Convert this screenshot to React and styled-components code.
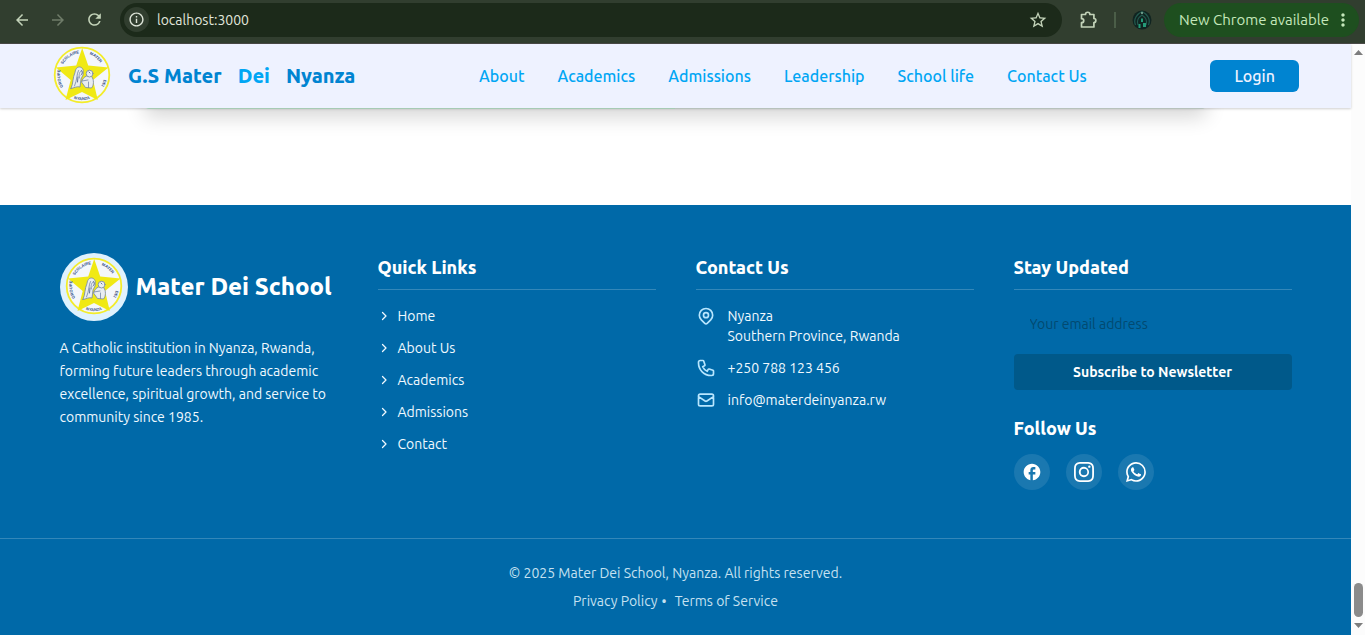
import React from 'react';
import styled, { createGlobalStyle } from 'styled-components';
import {
  HiOutlineChevronRight,
  HiOutlineLocationMarker,
  HiOutlinePhone,
  HiOutlineMail,
} from 'react-icons/hi';
import { MdFacebook, MdArrowBack, MdArrowForward, MdRefresh, MdMoreVert, MdStarBorder, MdOutlineInfo } from 'react-icons/md';
import { BsInstagram, BsWhatsapp } from 'react-icons/bs';

const GlobalStyle = createGlobalStyle`
  *, *::before, *::after { box-sizing: border-box; }
  body {
    margin: 0;
    background: #fff;
    font-family: Ubuntu, "Noto Sans", "Open Sans", sans-serif;
    font-size: 14px;
    line-height: 20px;
  }
  h1, h2, p, ul, address { margin: 0; padding: 0; font-style: normal; }
  ul { list-style: none; }
  a { color: inherit; text-decoration: none; }
  button, input { font: inherit; border: 0; cursor: pointer; }
  svg { display: block; flex: none; }
`;

const Window = styled.div`
  min-height: 100vh;
  display: flex;
  flex-direction: column;
`;

/* Browser toolbar */
const Toolbar = styled.div`
  height: 44px;
  padding: 0 6px 4px 8px;
  display: flex;
  align-items: center;
  background: #313e2f;
  border-bottom: 1px solid #4a4a47;
`;

const ToolButton = styled.button`
  width: 28px;
  height: 28px;
  margin-right: 8px;
  padding: 0;
  display: grid;
  place-items: center;
  background: none;
  color: ${(p) => (p.$dim ? '#6f7c69' : '#c3d3b9')};
`;

const AddressBar = styled.div`
  flex: 1;
  height: 34px;
  margin-left: 4px;
  padding: 0 14px 0 4px;
  display: flex;
  align-items: center;
  gap: 8px;
  border-radius: 17px;
  background: #1c2a1a;
  color: #c3d3b9;
`;

const SiteInfo = styled.button`
  width: 25px;
  height: 25px;
  padding: 0;
  display: grid;
  place-items: center;
  border-radius: 50%;
  background: #313e2f;
  color: #dfe6da;
`;

const AddressInput = styled.input`
  flex: 1;
  min-width: 0;
  padding: 0;
  background: none;
  color: #e1e6dc;
  outline: none;
`;

const BarIcon = styled.button`
  padding: 0;
  background: none;
  color: #c3d3b9;
`;

const BarTools = styled.div`
  display: flex;
  align-items: center;
  gap: 16px;
  padding: 0 12px 0 16px;
`;

const BarDivider = styled.span`
  width: 2px;
  height: 16px;
  background: #4b5e48;
`;

const UpdateChip = styled.button`
  height: 34px;
  min-width: 195px;
  padding: 0 6px 0 15px;
  display: flex;
  align-items: center;
  justify-content: space-between;
  border-radius: 17px;
  background: #1e4f1f;
  color: #c5e8bb;
  font-size: 15px;
  white-space: nowrap;
`;

/* Page area and its scrollbar */
const Viewport = styled.div`
  flex: 1;
  display: flex;
`;

const Page = styled.div`
  flex: 1;
  min-width: 0;
  display: flex;
  flex-direction: column;
`;

const ScrollTrack = styled.div`
  width: 14px;
  padding: 6px 2px 7px 3px;
  display: flex;
  flex-direction: column;
  align-items: center;
  background: #fcfcfc;
`;

const ScrollThumb = styled.div`
  width: 9px;
  height: 34px;
  margin: auto 0 6px;
  border-radius: 5px;
  background: #8b8b8b;
`;

/* Header */
const Header = styled.header`
  position: relative;
  z-index: 1;
  height: 64px;
  padding: 0 52px;
  display: flex;
  align-items: center;
  justify-content: space-between;
  background: #eef2ff;
  box-shadow: 0 1px 3px rgba(0, 0, 0, 0.1), 0 1px 2px rgba(0, 0, 0, 0.1);
`;

const Brand = styled.a`
  display: flex;
  align-items: center;
  gap: 16px;
  font-size: 20px;
  font-weight: 800;
  line-height: 28px;
  color: #0084d1;
`;

const BrandAccent = styled.span`
  color: #00a6f4;
`;

const Nav = styled.nav`
  display: flex;
  gap: 33px;
  font-size: 16px;
  font-weight: 500;
  line-height: 24px;
  color: #00a6f4;
`;

const LoginButton = styled.button`
  height: 32px;
  padding: 0 24px;
  border-radius: 6px;
  background: #0084d1;
  color: #eef2ff;
  font-size: 16px;
  font-weight: 500;
`;

/* Tail of the map card that scrolls under the header */
const MapSection = styled.main`
  flex: 1;
  min-height: 97px;
  padding: 0 145px;
  overflow: hidden;
`;

const MapCard = styled.div`
  height: 60px;
  margin-top: -59px;
  border-radius: 0 0 4px 4px;
  background: linear-gradient(90deg, #bfe9cf 0 50%, #d3ded8 50% 100%);
  box-shadow: 0 8px 20px rgba(0, 0, 0, 0.16);
`;

/* Footer */
const Footer = styled.footer`
  background: #0069a8;
  color: #f0f9ff;
`;

const Columns = styled.div`
  max-width: 1280px;
  margin: 0 auto;
  padding: 48px 24px;
  display: grid;
  grid-template-columns: repeat(4, minmax(0, 1fr));
  gap: 40px;
`;

const SchoolName = styled.div`
  display: flex;
  align-items: center;
  gap: 8px;
  margin-bottom: 16px;
`;

const Badge = styled.span`
  padding: 4px;
  border-radius: 50%;
  background: #dff2fe;
`;

const SchoolTitle = styled.h1`
  font-size: 24px;
  font-weight: 800;
  line-height: 32px;
  color: #fff;
  white-space: nowrap;
`;

const About = styled.p`
  line-height: 23px;
`;

const Heading = styled.h2`
  font-size: 18px;
  font-weight: 800;
  line-height: 28px;
  color: #fff;
  ${(p) =>
    p.$ruled
      ? 'padding-bottom: 8px; margin-bottom: 16px; border-bottom: 1px solid rgba(255, 255, 255, 0.2);'
      : 'margin-bottom: 12px;'}
`;

const List = styled.ul`
  display: flex;
  flex-direction: column;
  gap: 12px;
`;

const QuickLink = styled.a`
  display: flex;
  align-items: center;
  gap: 8px;

  path { stroke-width: 2.5; }
`;

const ContactItem = styled.li`
  display: flex;
  gap: 12px;

  svg { color: #b8e6fe; }
`;

const Form = styled.form`
  display: flex;
  flex-direction: column;
  gap: 12px;
  margin-bottom: 24px;
`;

const EmailInput = styled.input`
  height: 36px;
  padding: 0 16px;
  border-radius: 4px;
  background: transparent;
  color: #fff;

  &::placeholder { color: #024a70; opacity: 1; }
`;

const SubscribeButton = styled.button`
  height: 36px;
  border-radius: 4px;
  background: #00598a;
  color: #fff;
  font-weight: 600;
`;

const Socials = styled.div`
  display: flex;
  gap: 16px;
`;

const SocialLink = styled.a`
  width: 36px;
  height: 36px;
  display: grid;
  place-items: center;
  border-radius: 50%;
  background: rgba(255, 255, 255, 0.1);
  color: #fff;
`;

const Legal = styled.div`
  padding: 24px;
  display: flex;
  flex-direction: column;
  align-items: center;
  gap: 8px;
  border-top: 1px solid rgba(255, 255, 255, 0.2);
  color: #c6e1f1;
`;

const LegalLinks = styled.p`
  display: flex;
  gap: 4px;
`;

const LegalDot = styled.span`
  margin-right: 4px;
`;

const Crest = ({ id }) => (
  <svg width="60" height="60" viewBox="0 0 60 60" role="img" aria-label="School crest">
    <defs>
      <path id={`${id}-ring`} d="M14.400 44.600A22 22 0 1 1 45.600 44.600" />
      <path id={`${id}-foot`} d="M12.300 46.700A25 25 0 0 0 47.700 46.700" />
    </defs>
    <circle cx="30" cy="29" r="27.300" fill="#f4f7fb" stroke="#f3ec2b" strokeWidth="1.800" />
    <path
      d="M30.200 2L36.200 19.500 56.500 21.500 41 34 45.800 54 30 46 13.500 54 18.700 34 4 21.500 24.200 19.500z"
      fill="#f0e914"
    />
    <g fill="#e9edf0" stroke="#7385a6" strokeWidth=".8" strokeLinecap="round">
      <path d="M19 42.500C21.500 37 20.500 32 23 26.500C23.500 22 26 20.500 28.500 21.200C31.800 22.200 31.500 26 31 29L29 33 28 41C25 40 22 42 19 42.500z" />
      <path d="M34.500 30C32 31 30.500 33 29.500 36L33.500 41.500 39.500 42C42 39 42 34 40 31z" />
      <circle cx="37.600" cy="27.600" r="3.400" />
      <path
        d="M26.500 24.500C24.500 28 25.500 33 22.500 40M29.500 25C27.500 25 26.500 29 27.500 32M30 35L36 34M36.500 36L36.500 41.500"
        fill="none"
      />
      <path d="M29.500 24.500C31 26 30.500 28 29 29M37 26L38 27M26 31L25.500 36" fill="none" stroke="#3c5485" />
    </g>
    <g fill="#2f4b83" fontSize="4" fontWeight="700" fontFamily="Liberation Sans, sans-serif">
      <text><textPath href={`#${id}-ring`} startOffset="5">GROUPE</textPath></text>
      <text><textPath href={`#${id}-ring`} startOffset="28">SCOLAIRE</textPath></text>
      <text><textPath href={`#${id}-ring`} startOffset="59">MATER</textPath></text>
      <text><textPath href={`#${id}-ring`} startOffset="90">DEI</textPath></text>
      <text textAnchor="middle"><textPath href={`#${id}-foot`} startOffset="50%">NYANZA</textPath></text>
    </g>
  </svg>
);

const PuzzleIcon = () => (
  <svg width="20" height="20" viewBox="0 0 20 20" fill="none" stroke="currentColor" strokeWidth="1.700" strokeLinejoin="round">
    <path d="M3.500 4.500h4c0-3 4.400-3 4.400 0h4v4c2.600 0 2.600 4 0 4v4.500h-12.400v-4.300c3 0 3-4 0-4z" />
  </svg>
);

const ProfileIcon = () => (
  <svg width="20" height="20" viewBox="0 0 20 20">
    <circle cx="10" cy="10" r="9.500" fill="#102421" />
    <path d="M3.500 15C1 9 5 4 10 1.500 15 4 19 9 16.500 15M6 15c-2-5 1-8 4-10 3 2 6 5 4 10" fill="none" stroke="#23594e" strokeWidth="1.200" />
    <path d="M9 9l1-1 1 1v3H9zM6.500 14h2v4h-2zM11 13h3v4h-3z" fill="#249b78" />
    <circle cx="10" cy="3" r="1" fill="#86b9a3" />
  </svg>
);

const ScrollArrow = ({ down }) => (
  <svg width="9" height="5" viewBox="0 0 9 5" fill="#7d7d7d">
    <path d={down ? 'M0 0h9L4.500 5z' : 'M0 5h9L4.500 0z'} />
  </svg>
);

const navItems = ['About', 'Academics', 'Admissions', 'Leadership', 'School life', 'Contact Us'];
const quickLinks = ['Home', 'About Us', 'Academics', 'Admissions', 'Contact'];

export default function App() {
  return (
    <>
      <GlobalStyle />
      <Window>
        <Toolbar>
          <ToolButton aria-label="Back"><MdArrowBack size={18} /></ToolButton>
          <ToolButton $dim aria-label="Forward"><MdArrowForward size={18} /></ToolButton>
          <ToolButton aria-label="Reload"><MdRefresh size={19} /></ToolButton>
          <AddressBar>
            <SiteInfo aria-label="Site information"><MdOutlineInfo size={17} /></SiteInfo>
            <AddressInput aria-label="Address" defaultValue="localhost:3000" />
            <BarIcon aria-label="Bookmark"><MdStarBorder size={20} /></BarIcon>
          </AddressBar>
          <BarTools>
            <BarIcon aria-label="Extensions"><PuzzleIcon /></BarIcon>
            <BarDivider />
            <BarIcon aria-label="Profile"><ProfileIcon /></BarIcon>
          </BarTools>
          <UpdateChip>
            New Chrome available
            <MdMoreVert size={20} />
          </UpdateChip>
        </Toolbar>
        <Viewport>
          <Page>
            <Header>
              <Brand href="#">
                <Crest id="header" />
                <span>G.S Mater</span>
                <BrandAccent>Dei</BrandAccent>
                <span>Nyanza</span>
              </Brand>
              <Nav>
                {navItems.map((item) => (
                  <a key={item} href="#">{item}</a>
                ))}
              </Nav>
              <LoginButton>Login</LoginButton>
            </Header>
            <MapSection>
              <MapCard />
            </MapSection>
            <Footer>
              <Columns>
                <section>
                  <SchoolName>
                    <Badge><Crest id="footer" /></Badge>
                    <SchoolTitle>Mater Dei School</SchoolTitle>
                  </SchoolName>
                  <About>
                    A Catholic institution in Nyanza, Rwanda, forming future leaders through academic
                    excellence, spiritual growth, and service to community since 1985.
                  </About>
                </section>
                <section>
                  <Heading $ruled>Quick Links</Heading>
                  <List>
                    {quickLinks.map((item) => (
                      <li key={item}>
                        <QuickLink href="#">
                          <HiOutlineChevronRight size={12} />
                          {item}
                        </QuickLink>
                      </li>
                    ))}
                  </List>
                </section>
                <section>
                  <Heading $ruled>Contact Us</Heading>
                  <List>
                    <ContactItem>
                      <HiOutlineLocationMarker size={20} />
                      <address>Nyanza<br />Southern Province, Rwanda</address>
                    </ContactItem>
                    <ContactItem>
                      <HiOutlinePhone size={20} />
                      <a href="tel:+250788123456">+250 788 123 456</a>
                    </ContactItem>
                    <ContactItem>
                      <HiOutlineMail size={20} />
                      <a href="mailto:info@materdeinyanza.rw">info@materdeinyanza.rw</a>
                    </ContactItem>
                  </List>
                </section>
                <section>
                  <Heading $ruled>Stay Updated</Heading>
                  <Form>
                    <EmailInput type="email" aria-label="Your email address" placeholder="Your email address" />
                    <SubscribeButton type="button">Subscribe to Newsletter</SubscribeButton>
                  </Form>
                  <Heading>Follow Us</Heading>
                  <Socials>
                    <SocialLink href="#" aria-label="Facebook"><MdFacebook size={20} /></SocialLink>
                    <SocialLink href="#" aria-label="Instagram"><BsInstagram size={20} /></SocialLink>
                    <SocialLink href="#" aria-label="WhatsApp"><BsWhatsapp size={20} /></SocialLink>
                  </Socials>
                </section>
              </Columns>
              <Legal>
                <p>© 2025 Mater Dei School, Nyanza. All rights reserved.</p>
                <LegalLinks>
                  <a href="#">Privacy Policy</a>
                  <LegalDot>•</LegalDot>
                  <a href="#">Terms of Service</a>
                </LegalLinks>
              </Legal>
            </Footer>
          </Page>
          <ScrollTrack>
            <ScrollArrow />
            <ScrollThumb />
            <ScrollArrow down />
          </ScrollTrack>
        </Viewport>
      </Window>
    </>
  );
}
